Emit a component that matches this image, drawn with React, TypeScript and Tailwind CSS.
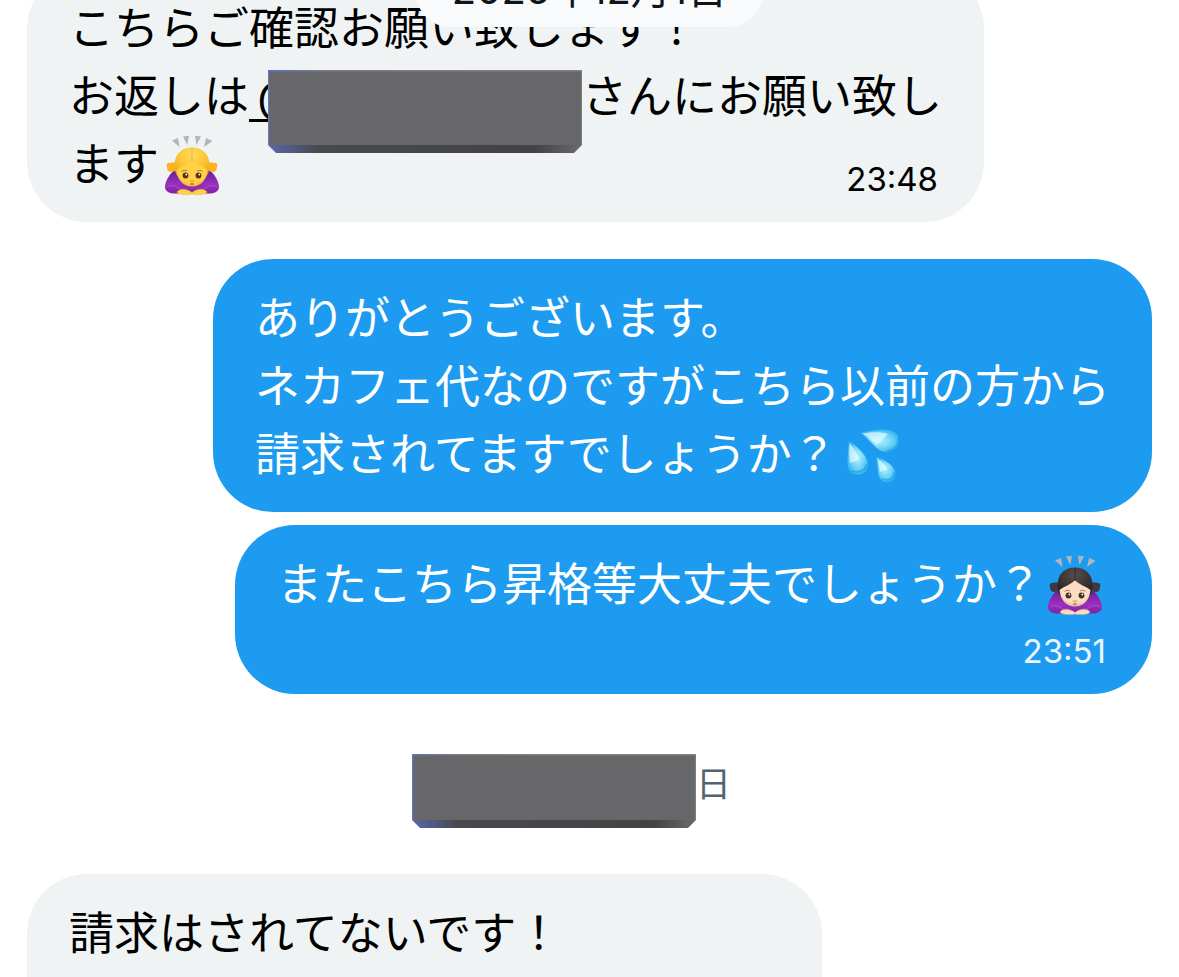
import React, { useId } from 'react';

type EmojiProps = { label: string; hair: string; hairLight: string; hairDark: string; bun: string; skin: string; skinDark: string; feature: string };

function BowingEmoji({ label, hair, hairLight, hairDark, bun, skin, skinDark, feature }: EmojiProps) {
  const id = useId().replace(/:/g, '');
  return (
    <svg role="img" aria-label={label} viewBox="0 0 60 60" className="mx-1 size-[60px] shrink-0">
      <defs>
        <radialGradient id={`h${id}`} cx="0.5" cy="0.25" r="0.75">
          <stop offset="0" stopColor={hairLight} />
          <stop offset="0.6" stopColor={hair} />
          <stop offset="1" stopColor={hairDark} />
        </radialGradient>
        <radialGradient id={`f${id}`} cx="0.5" cy="0.4" r="0.65">
          <stop offset="0" stopColor={skin} />
          <stop offset="0.7" stopColor={skin} />
          <stop offset="1" stopColor={skinDark} />
        </radialGradient>
        <linearGradient id={`b${id}`} x1="0" y1="0" x2="0" y2="1">
          <stop offset="0" stopColor="#6a1f8c" />
          <stop offset="0.6" stopColor="#9a2fc0" />
          <stop offset="1" stopColor="#7c23a2" />
        </linearGradient>
      </defs>
      <g fill="#b3b6b9">
        <path d="M9 5.500L15 3L16.500 12Z" />
        <path d="M20 1.500L26 0.800L24.300 10Z" />
        <path d="M32 0.800L38 1.500L33.500 10Z" />
        <path d="M43 3L49.500 6L41 12Z" />
      </g>
      <path d="M13 35C8 36 2 46 2 52C2 58 10 59.500 18 58H40C48 59.500 56 58 56 52C56 46 50 36 45 35Z" fill={`url(#b${id})`} />
      <path d="M4 52C8 49 14 51 18 55M54 52C50 49 44 51 40 55" fill="none" stroke="#b04fd0" strokeWidth="1.300" opacity="0.7" />
      <path d="M13 28C9 27 4 27.500 3.500 30C4.500 32 3.500 35 6 36.500C9 38 12 36 14 34Z" fill={bun} />
      <path d="M45 28C49 27 54 27.500 54.500 30C53.500 32 54.500 35 52 36.500C49 38 46 36 44 34Z" fill={bun} />
      <path d="M29 12.500C18 12.500 11.500 20 11.500 30C11.500 36 13 40 16 43H42C45 40 46.500 36 46.500 30C46.500 20 40 12.500 29 12.500Z" fill={`url(#h${id})`} />
      <path d="M29 25C25 30 18 31 13.500 35C14 44 20 51.500 29 51.500C38 51.500 44 44 44.500 35C40 31 33 30 29 25Z" fill={`url(#f${id})`} />
      <path d="M29 13V26" stroke={hairDark} strokeWidth="1" opacity="0.7" />
      <ellipse cx="22.500" cy="40.500" rx="2.900" ry="2.900" fill={feature} />
      <ellipse cx="35.500" cy="40.500" rx="2.900" ry="2.900" fill={feature} />
      <circle cx="23.300" cy="39.500" r="0.900" fill="#fff" />
      <circle cx="36.300" cy="39.500" r="0.900" fill="#fff" />
      <path d="M18.500 36.300Q21 34.600 24 35.800M34 35.800Q37 34.600 39.500 36.300" fill="none" stroke={feature} strokeWidth="0.900" opacity="0.55" />
      <path d="M27 45.500Q29 47.500 31 45.500" fill="none" stroke={skinDark} strokeWidth="1.500" />
      <path d="M27.500 49H30.500" stroke="#b5523d" strokeWidth="1.300" />
      <path d="M14 57C17 53 23 53.500 27.500 56.500L29 57.500L30.500 56.500C35 53.500 41 53 44 57C42 60 33 60 29 59C25 60 16 60 14 57Z" fill={skin} stroke={skinDark} strokeWidth="0.500" />
    </svg>
  );
}

function SweatEmoji() {
  return (
    <svg role="img" aria-label="汗" viewBox="0 0 60 60" className="ml-2 size-[60px] shrink-0">
      <defs>
        <radialGradient id="sweat" cx="0.5" cy="0.5" r="0.6">
          <stop offset="0" stopColor="#b5f0fc" />
          <stop offset="0.5" stopColor="#74d6f7" />
          <stop offset="1" stopColor="#27aaf0" />
        </radialGradient>
      </defs>
      <g fill="url(#sweat)">
        <path d="M15 8C27 5 39 3.500 46 5.500C54 8 56 16 52.500 21.500C48 28 39 29 33 24C27 19.500 23 13 15 8Z" />
        <path d="M3.500 15C10 20 20 28 22.500 36C25 44 20 49.500 13 49.500C6 49.500 2 45 2.500 37C2.800 30 3 24 3.500 15Z" />
        <path d="M30.500 31C37 34 46 38 49 44C52.500 50 49 57 43 57C37 57 34 54 33 47C32.500 41 32 37 30.500 31Z" />
      </g>
      <g fill="none" stroke="#1592dd" strokeWidth="1.800" strokeLinecap="round" opacity="0.5">
        <path d="M53 13C54 20 50 25 43 26" />
        <path d="M21.500 40C20 46 13 48.500 7 46" />
        <path d="M49 48C48.500 54 43 56.500 38 54" />
      </g>
      <path d="M17 8.500C27 7 36 6.500 43 9L32 20C27 16 22 11 17 8.500Z" fill="#eafdff" opacity="0.65" />
      <path d="M4.500 18C9 24 13 29 14 35L5 38C4 31 4 25 4.500 18Z" fill="#eafdff" opacity="0.65" />
      <path d="M32 33C37 37 41 40 42 44L35 47C34 42 33 38 32 33Z" fill="#eafdff" opacity="0.65" />
    </svg>
  );
}

function Redaction({ className, width, height }: { className: string; width: number; height: number }) {
  const id = useId().replace(/:/g, '');
  const edge = height - 8;
  return (
    <svg aria-hidden="true" viewBox={`0 0 ${width} ${height}`} className={className}>
      <defs>
        <linearGradient id={`e${id}`}>
          <stop offset="0" stopColor="#5968ad" />
          <stop offset="0.16" stopColor="#48494f" />
          <stop offset="0.85" stopColor="#434345" />
          <stop offset="1" stopColor="#6b6b6d" />
        </linearGradient>
        <linearGradient id={`t${id}`}>
          <stop offset="0" stopColor="#5a6fd0" />
          <stop offset="0.18" stopColor="#7c7c80" />
          <stop offset="1" stopColor="#838385" />
        </linearGradient>
      </defs>
      <path d={`M0 ${edge - 1}H${width}V${edge}L${width - 8} ${height}H8L0 ${edge}Z`} fill={`url(#e${id})`} />
      <rect width={width} height={edge} rx="1" fill="#676769" />
      <rect width={width} height="1.500" fill={`url(#t${id})`} />
      <rect width="1.200" height={edge} fill="#6574b8" />
      <rect x={width - 1.2} width="1.200" height={edge} fill="#7d7d80" />
    </svg>
  );
}

function Bubble({ mine = false, className = '', children }: { mine?: boolean; className?: string; children: React.ReactNode }) {
  const tone = mine ? 'self-end bg-[#1d9bf0] text-white' : 'self-start bg-[#eff3f4] text-black';
  return (
    <article className={`rounded-[60px] px-[42px] pt-[26px] pb-[23px] text-[45px] leading-[68px] whitespace-nowrap ${tone} ${className}`}>
      {children}
    </article>
  );
}

const Line = ({ children }: { children: React.ReactNode }) => <p className="flex h-[68px] items-center">{children}</p>;

export default function App() {
  return (
    <main className="relative h-screen overflow-hidden bg-white font-['Inter','Noto_Sans_CJK_JP',sans-serif]">
      <div className="-mt-[31px] flex flex-col px-[27px]">
        <Bubble>
          <Line>こちらご確認お願い致します！</Line>
          <Line>
            お返しは
            <a href="#mention" className="relative w-[333px] underline decoration-3 underline-offset-6 [text-decoration-skip-ink:none]">
              {'\u2009@'}
              <Redaction width={314} height={83} className="absolute top-[7px] left-[19px] h-[83px] w-[314px]" />
            </a>
            さんにお願い致し
          </Line>
          <div className="flex justify-between">
            <Line>
              ます
              <BowingEmoji label="お辞儀する人" hair="#fdc22d" hairLight="#ffdc62" hairDark="#ee9f16" bun="#f9b423" skin="#ffd04a" skinDark="#f2a91f" feature="#5b3210" />
            </Line>
            <time className="pt-7 pr-1 text-[33px] leading-10">23:48</time>
          </div>
        </Bubble>

        <Bubble mine className="mt-[37px]">
          <Line>ありがとうございます。</Line>
          <Line>ネカフェ代なのですがこちら以前の方から</Line>
          <Line>
            請求されてますでしょうか？
            <SweatEmoji />
          </Line>
        </Bubble>

        <Bubble mine className="mt-[13px]">
          <Line>
            またこちら昇格等大丈夫でしょうか？
            <BowingEmoji label="お辞儀する女性" hair="#393233" hairLight="#574d4b" hairDark="#211c1f" bun="#3c3a40" skin="#fbdcc2" skinDark="#dba887" feature="#49301d" />
          </Line>
          <time className="mt-3 block pr-1 text-right text-[33px] leading-10 text-[#e8f5fe]">23:51</time>
        </Bubble>

        <div className="mt-[60px] flex justify-center pr-9 text-[35px] leading-[60px] text-[#536471]">
          <Redaction width={284} height={74} className="h-[74px] w-[284px]" />
          <span>日</span>
        </div>

        <Bubble className="mt-[46px] h-[252px] w-[795px]">
          <Line>請求はされてないです！</Line>
        </Bubble>
      </div>

      <div className="absolute inset-x-0 -top-[45px] flex justify-center">
        <time className="rounded-[34px] bg-[#f9fafb] px-9 pt-[10px] pb-3 text-[40px] leading-[50px] text-[#0f1419]">2025年12月1日</time>
      </div>
    </main>
  );
}
